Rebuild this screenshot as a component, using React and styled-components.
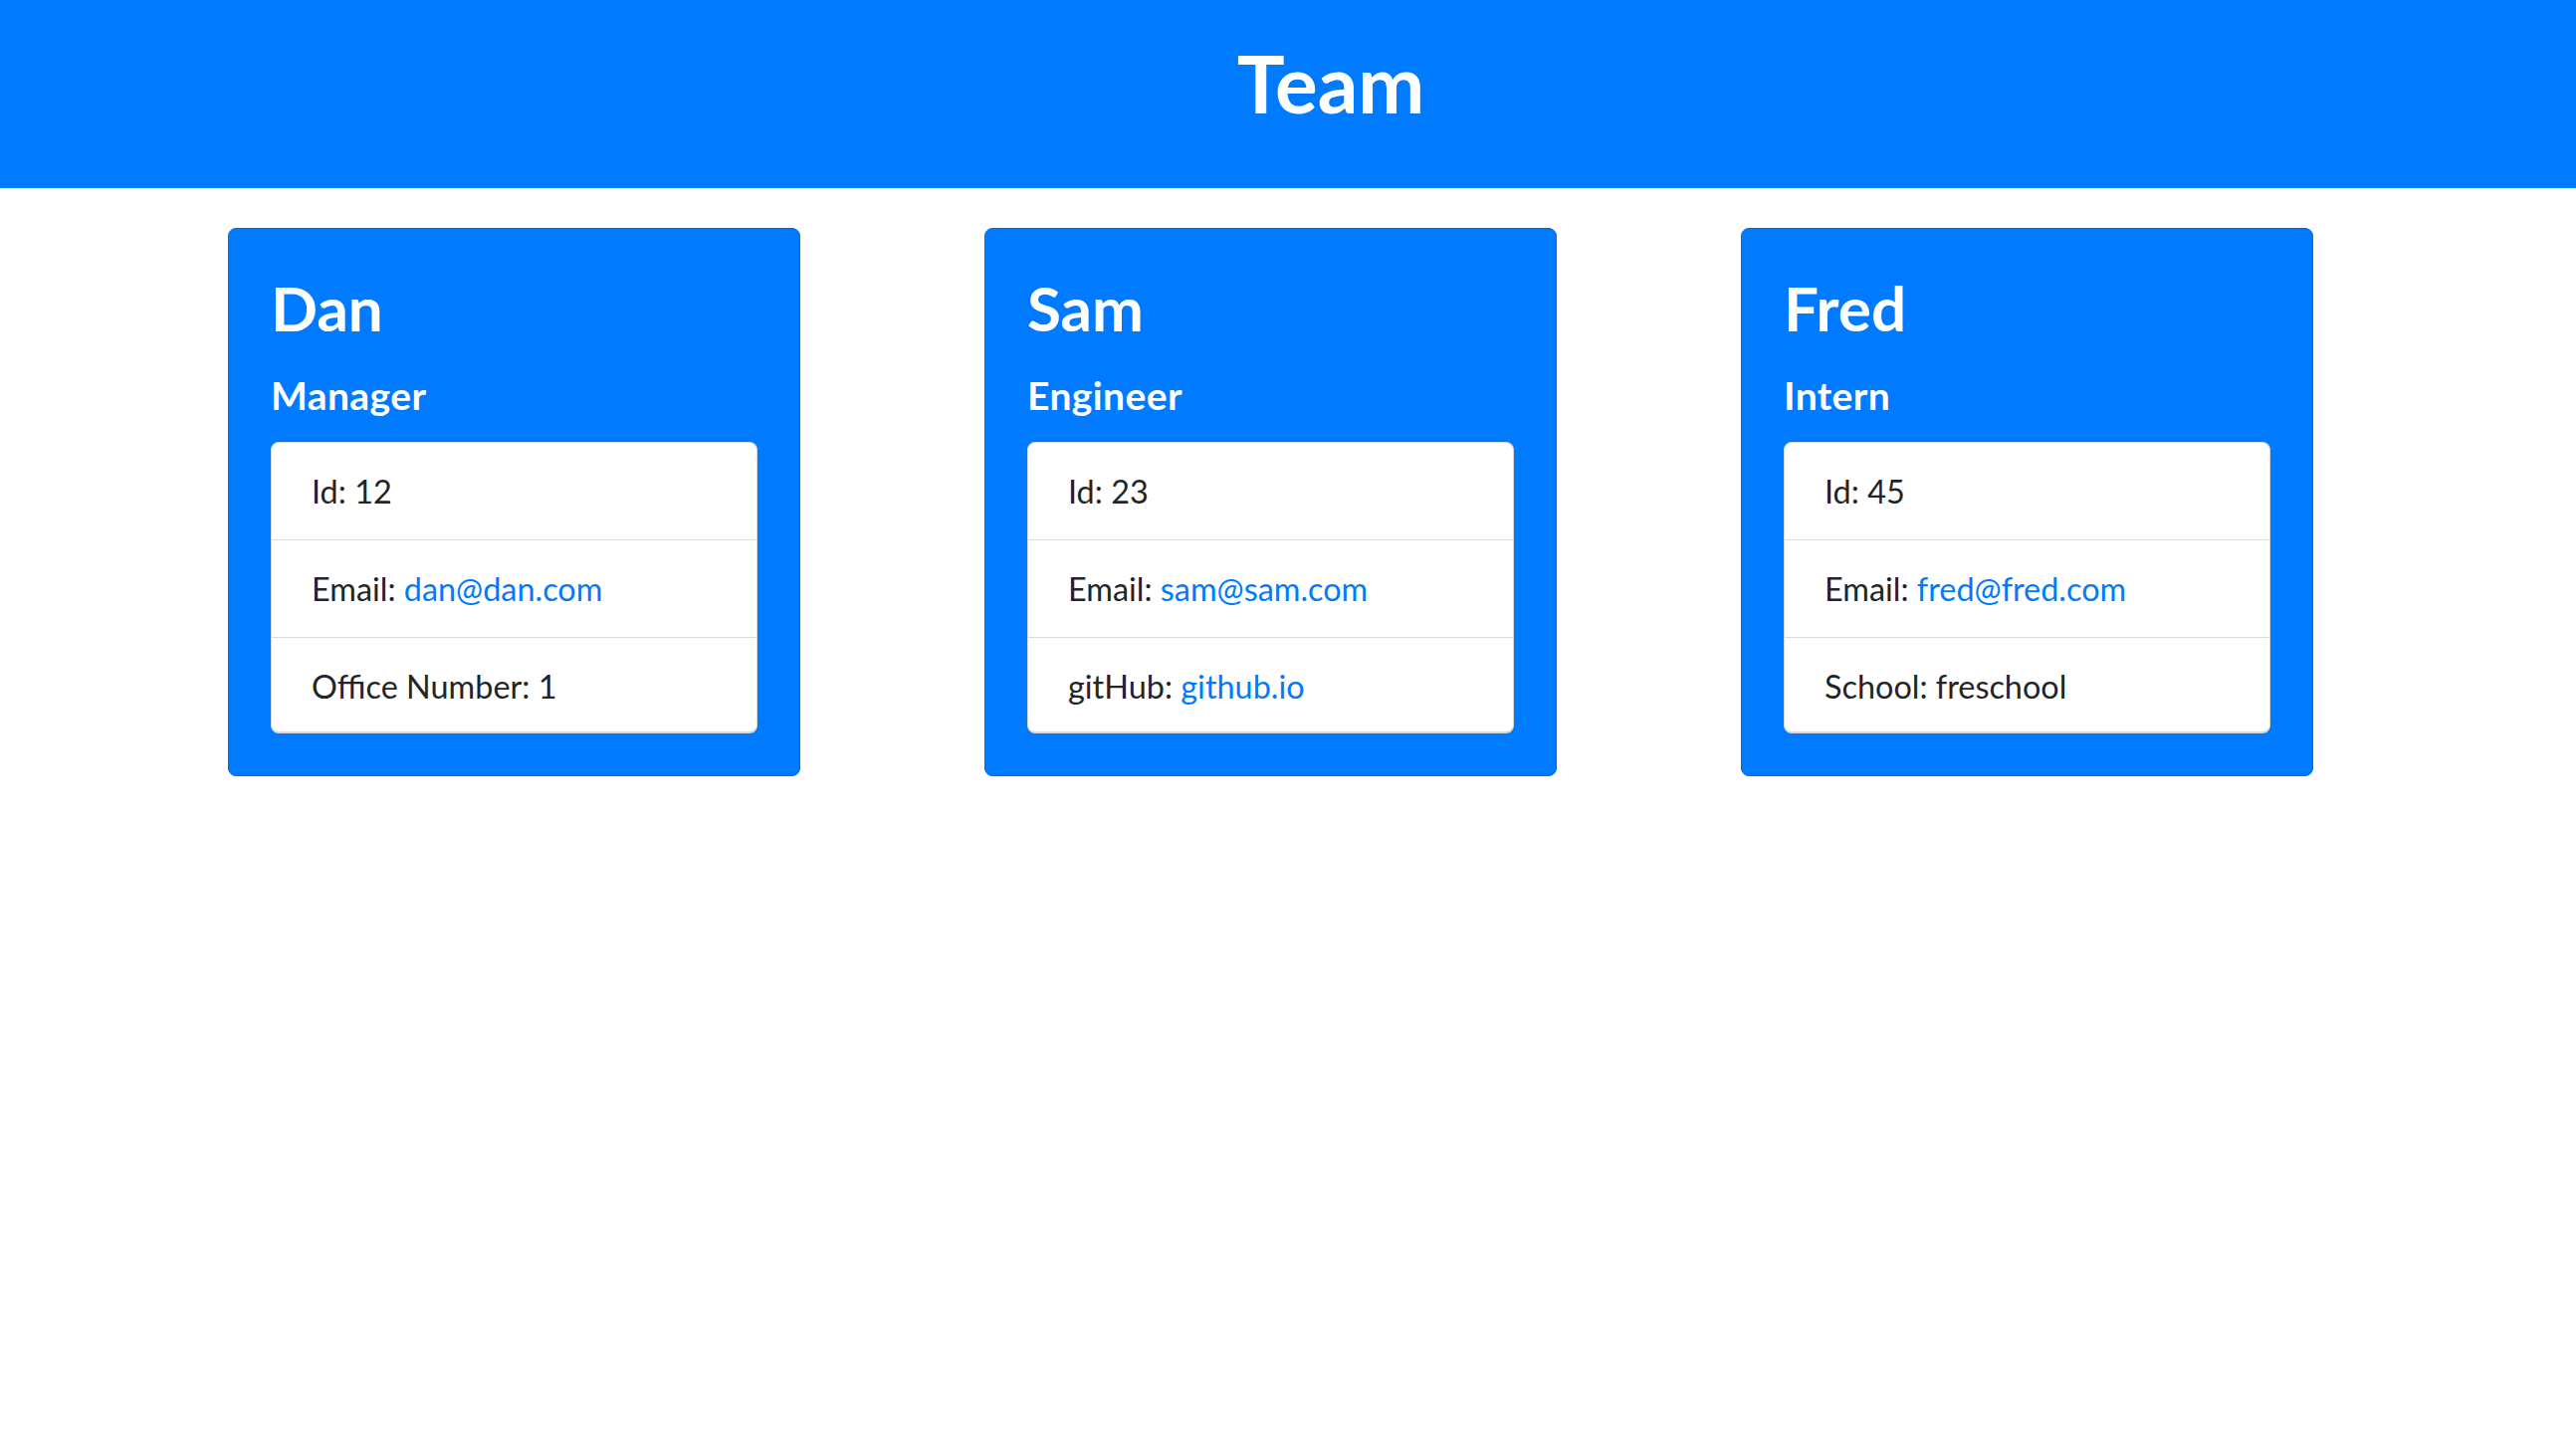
import React from "react";
import styled, { createGlobalStyle } from "styled-components";

const GlobalStyle = createGlobalStyle`
  html, body { margin: 0; padding: 0; background: #ffffff; }
  body {
    font-family: Lato, "Open Sans", "Noto Sans", sans-serif;
    color: #212529;
  }
  * { box-sizing: border-box; }
`;

const Header = styled.header`
  background: #007bff;
  height: 189px;
  padding: 35px 0 0 86px;
  text-align: center;
`;

const Title = styled.h1`
  margin: 0;
  font-size: 80px;
  line-height: 96px;
  font-weight: 700;
  color: #ffffff;
`;

const Row = styled.main`
  display: flex;
  gap: 185px;
  padding: 40px 0 0 229px;
`;

const Card = styled.section`
  width: 575px;
  height: 551px;
  background: #007bff;
  border: 1px solid #006ee6;
  border-radius: 8px;
  padding: 42px;
  display: flex;
  flex-direction: column;
`;

const Name = styled.h2`
  margin: 0 0 28px;
  font-size: 62px;
  line-height: 74px;
  font-weight: 700;
  color: #ffffff;
`;

const Role = styled.h3`
  margin: 0 0 24px;
  font-size: 39px;
  line-height: 46px;
  font-weight: 700;
  letter-spacing: 0.4px;
  color: #ffffff;
`;

const List = styled.ul`
  list-style: none;
  margin: 0;
  padding: 0;
  background: #ffffff;
  border: 1px solid #d9d9d9;
  border-bottom-width: 2px;
  border-radius: 8px;
  overflow: hidden;
`;

const Item = styled.li`
  padding: 24px 40px;
  font-size: 32.4px;
  line-height: 49px;
  color: #212529;
  & + & { border-top: 1px solid #dcdcdc; }
`;

const Link = styled.a`
  color: #007bff;
  text-decoration: none;
`;

const team = [
  { name: "Dan", role: "Manager", id: 12, email: "dan@dan.com", extra: ["Office Number", "1"] },
  { name: "Sam", role: "Engineer", id: 23, email: "sam@sam.com", extra: ["gitHub", "github.io", true] },
  { name: "Fred", role: "Intern", id: 45, email: "fred@fred.com", extra: ["School", "freschool"] },
];

export default function App() {
  return (
    <>
      <GlobalStyle />
      <Header>
        <Title>Team</Title>
      </Header>
      <Row>
        {team.map((m) => (
          <Card key={m.name}>
            <Name>{m.name}</Name>
            <Role>{m.role}</Role>
            <List>
              <Item>Id: {m.id}</Item>
              <Item>
                Email: <Link href={`mailto:${m.email}`}>{m.email}</Link>
              </Item>
              <Item>
                {m.extra[0]}:{" "}
                {m.extra[2] ? <Link href="#">{m.extra[1]}</Link> : m.extra[1]}
              </Item>
            </List>
          </Card>
        ))}
      </Row>
    </>
  );
}
